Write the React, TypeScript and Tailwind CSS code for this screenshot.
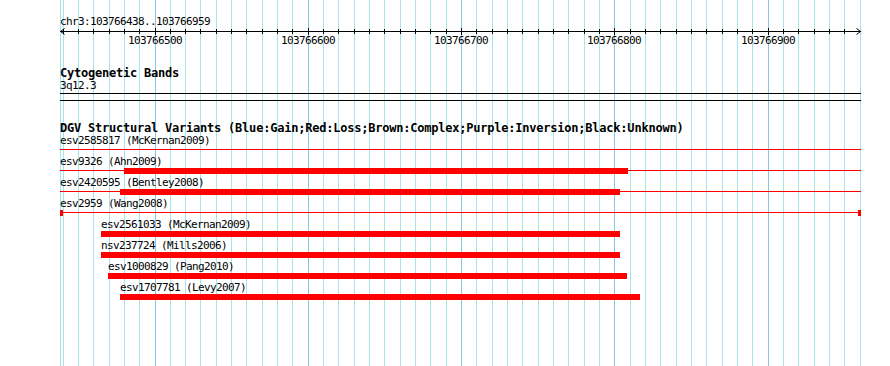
import React from "react";

const START = 103766438;
const SCALE = 800 / 522;
const px = (p: number) => Math.floor(60 + (p - START) * SCALE);

const gridPositions: number[] = [];
for (let p = 103766440; p <= 103766950; p += 10) gridPositions.push(p);

type Row = {
  label: string;
  labelX: number;
  line?: boolean;
  bar?: [number, number];
  caps?: boolean;
};

const rows: Row[] = [
  { label: "esv2585817 (McKernan2009)", labelX: 60, line: true },
  { label: "esv9326 (Ahn2009)", labelX: 60, line: true, bar: [124, 628] },
  { label: "esv2420595 (Bentley2008)", labelX: 60, line: true, bar: [120, 620] },
  { label: "esv2959 (Wang2008)", labelX: 60, line: true, caps: true },
  { label: "esv2561033 (McKernan2009)", labelX: 101, bar: [101, 620] },
  { label: "nsv237724 (Mills2006)", labelX: 101, bar: [101, 620] },
  { label: "esv1000829 (Pang2010)", labelX: 108, bar: [108, 627] },
  { label: "esv1707781 (Levy2007)", labelX: 120, bar: [120, 640] },
];

function Grid() {
  return (
    <svg
      className="absolute inset-0"
      width={890}
      height={366}
      shapeRendering="crispEdges"
    >
      <rect x={60} y={0} width={1} height={366} fill="#a6e4ec" />
      <rect x={860} y={0} width={1} height={366} fill="#a6e4ec" />
      {gridPositions.map((p) => (
        <rect
          key={p}
          x={px(p)}
          y={0}
          width={1}
          height={366}
          fill={p % 100 === 0 ? "#84c6e6" : "#a6e4ec"}
        />
      ))}
    </svg>
  );
}

function Ruler() {
  return (
    <svg width={890} height={22} shapeRendering="crispEdges" className="block">
      <rect x={60} y={3} width={801} height={1} fill="#000" />
      {gridPositions.map((p) => {
        const major = p % 100 === 0;
        return (
          <rect
            key={p}
            x={px(p)}
            y={major ? 0 : 1}
            width={1}
            height={major ? 7 : 5}
            fill="#000"
          />
        );
      })}
      <polyline
        points="64.5,0.5 60.5,3.5 64.5,6.5"
        fill="none"
        stroke="#000"
        strokeWidth={1}
        shapeRendering="auto"
      />
      <polyline
        points="856.5,0.5 860.5,3.5 856.5,6.5"
        fill="none"
        stroke="#000"
        strokeWidth={1}
        shapeRendering="auto"
      />
      {gridPositions
        .filter((p) => p % 100 === 0)
        .map((p) => (
          <text
            key={p}
            x={px(p) - 27}
            y={16}
            fontSize={11}
            letterSpacing={-0.62}
            fill="#000"
            style={{ fontFamily: "'DejaVu Sans Mono', monospace" }}
          >
            {p}
          </text>
        ))}
    </svg>
  );
}

function FeatureRow({ row }: { row: Row }) {
  return (
    <div className="flex flex-col h-[21px]">
      <div
        className="h-[13px] text-[11px] leading-[13px] tracking-[-0.62px] whitespace-pre text-black"
        style={{ paddingLeft: row.labelX }}
      >
        {row.label}
      </div>
      <div className="relative h-[8px]">
        {row.line && (
          <div className="absolute left-[60px] top-[2px] w-[801px] h-px bg-[#ff0000]" />
        )}
        {row.bar && (
          <div
            className="absolute top-0 h-[6px] bg-[#ff0000]"
            style={{ left: row.bar[0], width: row.bar[1] - row.bar[0] }}
          />
        )}
        {row.caps && (
          <>
            <div className="absolute top-0 left-[60px] w-[3px] h-[6px] bg-[#ff0000]" />
            <div className="absolute top-0 left-[858px] w-[3px] h-[6px] bg-[#ff0000]" />
          </>
        )}
      </div>
    </div>
  );
}

export default function App() {
  return (
    <div className="relative w-[890px] h-[366px] bg-white overflow-hidden [font-family:'DejaVu_Sans_Mono',monospace] text-black">
      <Grid />
      <div className="relative flex flex-col pt-[15px]">
        <div className="h-[13px] pl-[60px] text-[11px] leading-[13px] tracking-[-0.62px] whitespace-pre">
          chr3:103766438..103766959
        </div>
        <Ruler />
        <div className="mt-[17px] h-[12px] pl-[60px] text-[12px] leading-[12px] font-bold tracking-[-0.22px] whitespace-pre">
          Cytogenetic Bands
        </div>
        <div className="h-[13px] pl-[60px] text-[11px] leading-[13px] tracking-[-0.62px] whitespace-pre">
          3q12.3
        </div>
        <div className="mt-[1px] ml-[60px] w-[801px] h-px bg-black" />
        <div className="mt-[6px] ml-[60px] w-[801px] h-px bg-black" />
        <div className="mt-[21px] h-[12px] pl-[60px] text-[12px] leading-[12px] font-bold tracking-[-0.22px] whitespace-pre">
          DGV Structural Variants (Blue:Gain;Red:Loss;Brown:Complex;Purple:Inversion;Black:Unknown)
        </div>
        {rows.map((r) => (
          <FeatureRow key={r.label} row={r} />
        ))}
      </div>
    </div>
  );
}
